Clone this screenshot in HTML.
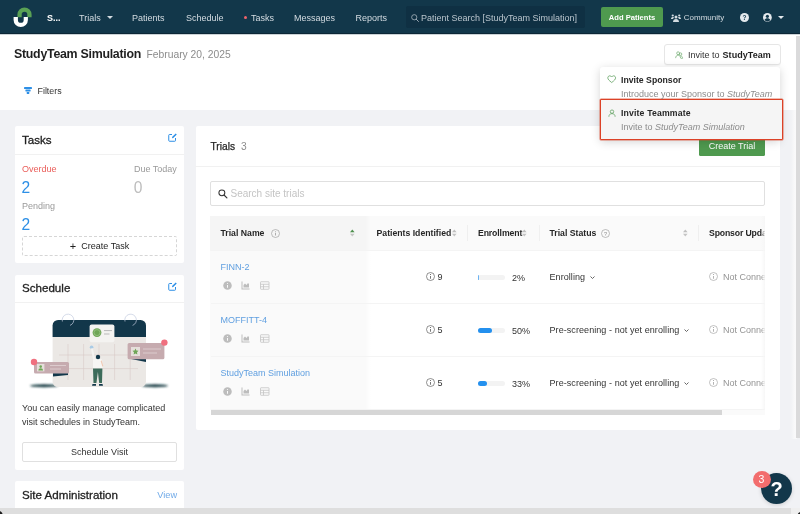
<!DOCTYPE html>
<html lang="en">
<head>
<meta charset="utf-8">
<title>StudyTeam Simulation</title>
<style>
*{box-sizing:border-box;margin:0;padding:0}
html,body{width:800px;height:514px;overflow:hidden;background:#f1f2f5}
body{will-change:transform;position:relative;font-family:"Liberation Sans",sans-serif;font-size:9px;color:#262626;-webkit-font-smoothing:antialiased}
.a{position:absolute}
.t{position:absolute;white-space:nowrap;line-height:12px;height:12px}
.b{font-weight:700}
.i{font-style:italic}
svg{position:absolute;overflow:visible}
/* nav */
#nav{left:0;top:0;width:800px;height:34px;background:#12374a}
#nav .t{color:#d3dbe1;top:11.500px}
#search{left:406px;top:6px;width:179px;height:22px;background:#0f3043;border-radius:2px}
#addp{left:601px;top:7px;width:62px;height:20px;background:#4f9a4f;border-radius:2px}
/* header */
#hdr{left:0;top:34px;width:800px;height:76px;background:#fff}
#invite{left:664px;top:44px;width:117px;height:21px;background:#fff;border:1px solid #e6e6e6;border-radius:3px;box-shadow:0 1px 1px rgba(0,0,0,.03)}
/* dropdown */
#dd{left:600px;top:67px;width:180px;height:72.500px;background:#fff;border-radius:3px;box-shadow:0 2px 10px rgba(0,0,0,.17)}
#dd2{left:599.500px;top:99px;width:183.800px;height:40.600px;background:#f5f5f5;border:1px solid #dc4227;border-radius:1px;box-shadow:0 0 0 .5px rgba(220,66,39,.7)}
.g{color:#8c8c8c}
/* cards */
.card{position:absolute;background:#fff;border-radius:2px}
.hl{position:absolute;height:1px;background:#f1f1f1}
.h2{font-size:11.6px;color:#1f1f1f;line-height:14px;height:14px;-webkit-text-stroke:.3px #1f1f1f}
.btn{position:absolute;border:1px solid #dddddd;border-radius:2px;background:#fff;text-align:center;line-height:18px;color:#333}
.th{font-size:8.700px;color:#262626}
.lk{color:#5f9fe0}
.st{color:#333;letter-spacing:.07px}
.nc{color:#9a9a9a}
.pb{position:absolute;width:27.500px;height:5.200px;border-radius:2.600px;background:#f3f3f3;margin-top:-.5px}
.pb i{display:block;height:5.200px;border-radius:2.600px;background:#2490ee}
#tbl .t{color:#333}
#tbl .t.lk{color:#5f9fe0}
#tbl .t.nc{color:#949494}
#tbl .t.th{color:#262626}
</style>
</head>
<body>
<!-- NAVBAR -->
<div id="nav" class="a">
  <svg width="34" height="34" viewBox="0 0 34 34" style="left:0;top:0">
    <path d="M17.4 17.200V14.600A7.100 7.100 0 0 1 31.600 14.600V17.200H27.300V14.600A2.800 2.800 0 0 0 21.700 14.600V17.200Z" fill="#5aa155"/>
    <path d="M13.600 16.900V19.900A7.150 7.150 0 0 0 27.900 19.900V16.900H23.700V19.900A2.900 2.900 0 0 1 17.900 19.900V16.900Z" fill="#fff"/>
  </svg>
  <div class="t b" style="left:47px;color:#fff">S...</div>
  <div class="t" style="left:79px">Trials</div>
  <svg width="6" height="3" viewBox="0 0 6 3" style="left:107px;top:16px"><path d="M0 0h6L3 3z" fill="#d3dbe1"/></svg>
  <div class="t" style="left:132px">Patients</div>
  <div class="t" style="left:186px">Schedule</div>
  <div class="a" style="left:244px;top:16px;width:3.4px;height:3.4px;border-radius:50%;background:#f0636b"></div>
  <div class="t" style="left:251px">Tasks</div>
  <div class="t" style="left:294px">Messages</div>
  <div class="t" style="left:355.5px">Reports</div>
  <div id="search" class="a"></div>
  <svg width="8" height="8" viewBox="0 0 16 16" style="left:410.5px;top:13.5px"><circle cx="6.5" cy="6.5" r="5.2" fill="none" stroke="#aab6bf" stroke-width="1.6"/><path d="M10.5 10.5L15 15" stroke="#aab6bf" stroke-width="1.8" stroke-linecap="round"/></svg>
  <div class="t" style="left:421px;color:#b9c4cc">Patient Search [StudyTeam Simulation]</div>
  <div id="addp" class="a"></div>
  <div class="t b" style="left:608.8px;color:#fff;font-size:7.6px">Add Patients</div>
  <svg width="10" height="8" viewBox="0 0 20 16" style="left:670.5px;top:13.5px" fill="#d3dbe1">
    <circle cx="10" cy="6" r="3"/><path d="M4 16c0-4 2.500-6 6-6s6 2 6 6z"/>
    <circle cx="3.500" cy="3" r="2.200"/><circle cx="16.500" cy="3" r="2.200"/>
    <path d="M0 10c0-2.500 1.500-4 3.500-4 1 0 1.800.3 2.500 1-1 1-1.500 2-2 3z"/><path d="M20 10c0-2.500-1.500-4-3.500-4-1 0-1.800.3-2.500 1 1 1 1.500 2 2 3z"/>
  </svg>
  <div class="t" style="left:683.8px;font-size:8px">Community</div>
  <svg width="9" height="9" viewBox="0 0 18 18" style="left:739.5px;top:13px"><circle cx="9" cy="9" r="9" fill="#e4e9ed"/><text x="9" y="13.600" text-anchor="middle" font-family="Liberation Sans, sans-serif" font-weight="700" font-size="13" fill="#12374a">?</text></svg>
  <svg width="8.800" height="8.800" viewBox="0 0 18 18" style="left:763.300px;top:13.100px"><circle cx="9" cy="9" r="9" fill="#e4e9ed"/><circle cx="9" cy="6.800" r="3.200" fill="#12374a"/><path d="M3 14.500c1-3 3.500-4 6-4s5 1 6 4c-1.500 1.800-3.500 2.700-6 2.700s-4.500-.9-6-2.700z" fill="#12374a"/></svg>
  <svg width="6" height="3" viewBox="0 0 6 3" style="left:778px;top:16px"><path d="M0 0h6L3 3z" fill="#e4e9ed"/></svg>
</div>

<div class="a" style="left:0;top:33px;width:800px;height:1px;background:#0c2636"></div>
<!-- PAGE HEADER -->
<div id="hdr" class="a"></div>
<div class="a" style="left:0;top:34px;width:800px;height:1px;background:rgba(18,55,74,.22)"></div>
<div class="t b" style="left:14px;top:47px;font-size:12.4px;letter-spacing:-.28px;line-height:14px;height:14px;color:#1f1f1f">StudyTeam Simulation</div>
<div class="t" style="left:146.500px;top:49px;font-size:10.3px;color:#8c8c8c">February 20, 2025</div>
<div id="invite" class="a"></div>
<svg width="8" height="8" viewBox="0 0 18 18" style="left:674.800px;top:50.500px" fill="none" stroke="#6aa86a" stroke-width="1.500">
  <circle cx="7" cy="5" r="3.200"/><path d="M1.500 16c0-4 2-6.500 5.500-6.500s5.500 2.500 5.500 6.500"/>
  <circle cx="12.500" cy="7" r="2.800"/><path d="M12.500 11c3 0 4.500 2 4.500 5.500h-4"/>
</svg>
<div class="t" style="left:688px;top:48.500px;color:#333">Invite to <span class="b" style="color:#1f1f1f;letter-spacing:.06px;margin-left:.5px">StudyTeam</span></div>
<svg width="8" height="7" viewBox="0 0 16 14" style="left:24.200px;top:87.400px" fill="#2d8fe6"><rect x="0" y="0" width="16" height="3.800" rx=".8"/><rect x="2.800" y="5.100" width="10.400" height="3.800" rx=".8"/><rect x="5.400" y="10.200" width="5.200" height="3.800" rx=".8"/></svg>
<div class="t" style="left:37.500px;top:85px;font-size:8.900px;color:#333">Filters</div>

<!-- LEFT: TASKS -->
<div class="card" style="left:15px;top:126.400px;width:169px;height:136.800px"></div>
<div class="t h2" style="left:22px;top:132.500px">Tasks</div>
<svg class="edit" width="9" height="9" viewBox="0 0 18 18" style="left:168px;top:133px" fill="none" stroke="#2d8fe6" stroke-width="2"><path d="M8 3H3a1.500 1.500 0 0 0-1.500 1.500V15A1.500 1.500 0 0 0 3 16.500h10.500A1.500 1.500 0 0 0 15 15v-5"/><path d="M8 10.500l.5-3L15.500 .8l2 2L10.500 10z" fill="#2d8fe6" stroke="none"/></svg>
<div class="hl" style="left:15px;top:154px;width:169px"></div>
<div class="t" style="left:22px;top:162.500px;color:#ea5e5a">Overdue</div>
<div class="t" style="left:134px;top:162.500px;color:#9a9a9a">Due Today</div>
<div class="t" style="left:21.500px;top:179px;font-size:15.600px;line-height:18px;height:18px;color:#2d8fe6">2</div>
<div class="t" style="left:133.800px;top:179px;font-size:15.600px;line-height:18px;height:18px;color:#bdbdbd">0</div>
<div class="t" style="left:22px;top:199.500px;color:#9a9a9a">Pending</div>
<div class="t" style="left:21.500px;top:216px;font-size:15.600px;line-height:18px;height:18px;color:#2d8fe6">2</div>
<div class="btn" style="left:22px;top:236px;width:155px;height:20px;border-style:dashed;border-color:#d6d6d6;color:#1f1f1f;line-height:17.500px"><span style="font-size:11px;position:relative;top:.5px;margin-right:5px">+</span>Create Task</div>

<!-- LEFT: SCHEDULE -->
<div class="card" style="left:15px;top:275px;width:169px;height:195px"></div>
<div class="t h2" style="left:22px;top:281px">Schedule</div>
<svg class="edit" width="9" height="9" viewBox="0 0 18 18" style="left:168px;top:281.500px" fill="none" stroke="#2d8fe6" stroke-width="2"><path d="M8 3H3a1.500 1.500 0 0 0-1.500 1.500V15A1.500 1.500 0 0 0 3 16.500h10.500A1.500 1.500 0 0 0 15 15v-5"/><path d="M8 10.500l.5-3L15.500 .8l2 2L10.500 10z" fill="#2d8fe6" stroke="none"/></svg>
<div class="hl" style="left:15px;top:302px;width:169px"></div>
<svg id="illus" width="160" height="90" viewBox="20 305 160 90" style="left:20px;top:305px">
  <defs><filter id="bl" x="-20%" y="-200%" width="140%" height="500%"><feGaussianBlur stdDeviation="1"/></filter></defs>
  <ellipse cx="44" cy="385.700" rx="14" ry="1.500" fill="#1d4147" filter="url(#bl)"/>
  <ellipse cx="155" cy="385.700" rx="13" ry="1.500" fill="#1d4147" filter="url(#bl)"/>
  <rect x="52.600" y="320" width="93.400" height="67" rx="5.500" fill="#ebe8e5"/>
  <path d="M52.600 337v-11.500a5.500 5.500 0 0 1 5.500-5.500h82.400a5.500 5.500 0 0 1 5.500 5.500V337z" fill="#12374a"/>
  <path d="M62.400 321.500A5.800 5.800 0 1 1 70 325.400" fill="none" stroke="#c3cce0" stroke-width=".7"/>
  <path d="M125 321.500A5.800 5.800 0 1 1 132.600 325.400" fill="none" stroke="#c3cce0" stroke-width=".7"/>
  <g stroke="#d9cbc7" stroke-width=".6"><path d="M68 344v36M83.600 344v36M99 344v36M114.600 344v36M130.200 344v36M59 355h79M59 368.600h79"/></g>
  <rect x="89.600" y="324.400" width="24.800" height="17.800" rx="2" fill="#f4f3f1"/>
  <circle cx="97" cy="332.600" r="4.400" fill="#6fa657"/><circle cx="97" cy="332.600" r="3" fill="none" stroke="#a8cc96" stroke-width=".6"/>
  <path d="M104 330.600h8M104 334h5.500" stroke="#b9b9b9" stroke-width="1"/>
  <path d="M131 359h15v3z" fill="#12374a"/>
  <rect x="127.600" y="343" width="36.800" height="16.200" rx="1.500" fill="#c6abaf"/>
  <rect x="131" y="347" width="9" height="9" fill="#e6dfdb"/>
  <path d="M135.500 348.600l.9 1.900 2.100.3-1.500 1.500.35 2.100-1.850-1-1.850 1 .35-2.100-1.500-1.500 2.100-.3z" fill="#6fa657"/>
  <path d="M143 349h18M143 353h14" stroke="#dccbcd" stroke-width="1"/>
  <circle cx="164.400" cy="342.600" r="3.200" fill="#f0707f"/>
  <path d="M53 373h15v2l-15 1.500z" fill="#12374a"/>
  <rect x="34" y="362" width="35" height="11.400" rx="1.500" fill="#c6abaf"/>
  <rect x="37" y="364" width="7.400" height="7.400" fill="#e6dfdb"/>
  <circle cx="40.700" cy="366.600" r="1.300" fill="#6fa657"/><path d="M38.300 370.600a2.400 2.400 0 0 1 4.800 0z" fill="#6fa657"/>
  <path d="M50 365.500h16M50 369h11" stroke="#dccbcd" stroke-width="1"/>
  <circle cx="34" cy="362" r="3.200" fill="#f0707f"/>
  <!-- person -->
  <circle cx="91.600" cy="347.200" r="1.800" fill="#a9cbe6"/>
  <path d="M91 348.500l1.800-.3 2.300 10.500-2 1z" fill="#f4f3f1"/>
  <path d="M93 359.600q4.500-1.600 9 0l.6 9h-9.600z" fill="#f7f6f4"/>
  <path d="M101.500 360l1.800 6-1 .5-1.500-5z" fill="#f0c9b4"/>
  <circle cx="98" cy="357" r="2.200" fill="#12374a"/>
  <path d="M93 368.400h9.400l-.4 14.600h-2.800l-1.300-11-1.500 11h-2.900z" fill="#3c6b5a"/>
  <path d="M92.500 384h3.500v1.800h-4zM99 384h3.500l.5 1.800h-4z" fill="#12374a"/>
</svg>
<div class="t" style="left:22px;top:402px;color:#333">You can easily manage complicated</div>
<div class="t" style="left:22px;top:416px;color:#333">visit schedules in StudyTeam.</div>
<div class="btn" style="left:22px;top:442px;width:155px;height:20px;line-height:19px;border-color:#e0e0e0">Schedule Visit</div>

<!-- LEFT: SITE ADMIN -->
<div class="card" style="left:15px;top:481px;width:169px;height:40px"></div>
<div class="t h2" style="left:22px;top:488px">Site Administration</div>
<div class="t" style="left:157.300px;top:489px;font-size:9.200px;color:#70aae8">View</div>

<!-- MAIN CARD -->
<div class="card" style="left:195.600px;top:126.400px;width:584.400px;height:303.700px"></div>
<div class="t" style="left:210.500px;top:141px;font-size:10.200px;color:#262626"><span style="-webkit-text-stroke:.25px #262626">Trials</span><span style="color:#8c8c8c;margin-left:6px">3</span></div>
<div class="a" style="left:699px;top:137px;width:66px;height:18.500px;background:#4f9a4f;border-radius:1.500px;color:#fff;text-align:center;line-height:18.500px">Create Trial</div>
<div class="hl" style="left:195px;top:166px;width:585px"></div>
<div class="a" style="left:210px;top:181px;width:555px;height:25px;border:1px solid #e0e0e0;border-radius:2px;background:#fff"></div>
<svg width="9.500" height="9.500" viewBox="0 0 16 16" style="left:218px;top:188.500px"><circle cx="6.500" cy="6.500" r="5" fill="none" stroke="#333" stroke-width="1.700"/><path d="M10.500 10.500L15 15" stroke="#333" stroke-width="1.900" stroke-linecap="round"/></svg>
<div class="t" style="left:230.500px;top:187.500px;font-size:10px;color:#c4c4c4">Search site trials</div>

<!-- TABLE -->
<div class="a" style="left:210.200px;top:216px;width:2px;height:34.500px;background:#f5f5f5"></div>
<div class="a" style="left:210.200px;top:250.500px;width:2px;height:159px;background:#fafafa"></div>
<div id="tbl" class="a" style="left:210.500px;top:216px;width:554.500px;height:199px;overflow:hidden;background:#fff">
  <div class="a" style="left:0;top:0;width:700px;height:34.500px;background:#fafafa"></div>
  <div class="a" style="left:0;top:0;width:155px;height:34.500px;background:#f5f5f5"></div>
  <div class="a" style="left:0;top:34.500px;width:155px;height:159px;background:#fafafa"></div>
  <div class="a" style="left:155px;top:0;width:5px;height:193.500px;background:linear-gradient(90deg,rgba(0,0,0,.02),rgba(0,0,0,0))"></div>
  <div class="hl" style="left:0;top:34px;width:700px;background:#f4f4f4"></div>
  <div class="hl" style="left:0;top:87px;width:700px;background:#f4f4f4"></div>
  <div class="hl" style="left:0;top:140px;width:700px;background:#f4f4f4"></div>
  <div class="hl" style="left:0;top:193px;width:700px;background:#f4f4f4"></div>
  <!-- header separators -->
  <div class="a" style="left:256.500px;top:9px;width:1px;height:16px;background:#efefef"></div>
  <div class="a" style="left:328px;top:9px;width:1px;height:16px;background:#f0f0f0"></div>
  <div class="a" style="left:487px;top:9px;width:1px;height:16px;background:#efefef"></div>
  <!-- header text -->
  <div class="t b th" style="left:10px;top:10.500px">Trial Name</div>
  <div class="t b th" style="left:166px;top:10.500px">Patients Identified</div>
  <div class="t b th" style="left:267.500px;top:10.500px;letter-spacing:-.12px">Enrollment</div>
  <div class="t b th" style="left:339px;top:10.500px">Trial Status</div>
  <div class="t b th" style="left:498.500px;top:10.500px;letter-spacing:-.15px">Sponsor Updates</div>
  <!-- header icons -->
  <svg class="ic" width="9" height="9" viewBox="0 0 18 18" style="left:60.500px;top:12.500px"><circle cx="9" cy="9" r="8" fill="none" stroke="#9b9b9b" stroke-width="1.300"/><path d="M9 8v5" stroke="#9b9b9b" stroke-width="1.600"/><circle cx="9" cy="5.300" r="1" fill="#9b9b9b"/></svg>
  <svg class="ic" width="9" height="9" viewBox="0 0 18 18" style="left:390px;top:12.500px"><circle cx="9" cy="9" r="8" fill="none" stroke="#9b9b9b" stroke-width="1.300"/><text x="9" y="13" text-anchor="middle" font-family="Liberation Sans, sans-serif" font-size="11" fill="#8c8c8c">?</text></svg>
  <svg width="4.600" height="8" viewBox="0 0 4.600 8" style="left:139.500px;top:13px"><path d="M0 3.300L2.300 .5 4.600 3.300z" fill="#4d8f4d"/><path d="M0 4.700L2.300 7.500 4.600 4.700z" fill="#c4c4c4"/></svg>
  <svg width="4.600" height="8" viewBox="0 0 4.600 8" style="left:241.500px;top:13px"><path d="M0 3.300L2.300 .5 4.600 3.300z" fill="#bfbfbf"/><path d="M0 4.700L2.300 7.500 4.600 4.700z" fill="#c4c4c4"/></svg>
  <svg width="4.600" height="8" viewBox="0 0 4.600 8" style="left:311.500px;top:13px"><path d="M0 3.300L2.300 .5 4.600 3.300z" fill="#bfbfbf"/><path d="M0 4.700L2.300 7.500 4.600 4.700z" fill="#c4c4c4"/></svg>
  <svg width="4.600" height="8" viewBox="0 0 4.600 8" style="left:472.500px;top:13px"><path d="M0 3.300L2.300 .5 4.600 3.300z" fill="#bfbfbf"/><path d="M0 4.700L2.300 7.500 4.600 4.700z" fill="#c4c4c4"/></svg>

  <!-- ROW 1 -->
  <div class="t lk" style="left:10px;top:45px">FINN-2</div>
  <div class="t" style="left:227px;top:55px">9</div>
  <div class="pb" style="left:267px;top:59.500px"><i style="width:.8px;background:#6db3f2"></i></div>
  <div class="t" style="left:301.500px;top:55.500px">2%</div>
  <div class="t st" style="left:339px;top:55px">Enrolling</div>
  <div class="t nc" style="left:512.500px;top:55px">Not Connected</div>
  <!-- ROW 2 -->
  <div class="t lk" style="left:10px;top:98px">MOFFITT-4</div>
  <div class="t" style="left:227px;top:108px">5</div>
  <div class="pb" style="left:267px;top:112.500px"><i style="width:14px"></i></div>
  <div class="t" style="left:301.500px;top:108.500px">50%</div>
  <div class="t st" style="left:339px;top:108px">Pre-screening - not yet enrolling</div>
  <div class="t nc" style="left:512.500px;top:108px">Not Connected</div>
  <!-- ROW 3 -->
  <div class="t lk" style="left:10px;top:151px">StudyTeam Simulation</div>
  <div class="t" style="left:227px;top:161px">5</div>
  <div class="pb" style="left:267px;top:165.500px"><i style="width:9.500px"></i></div>
  <div class="t" style="left:301.500px;top:161.500px">33%</div>
  <div class="t st" style="left:339px;top:161px">Pre-screening - not yet enrolling</div>
  <div class="t nc" style="left:512.500px;top:161px">Not Connected</div>
  <!-- scrollbar -->
  <div class="a" style="left:0;top:193.500px;width:554.500px;height:5.500px;background:#fafafa"></div>
  <div class="a" style="left:0;top:193.500px;width:511px;height:5.500px;background:#d6d6d6"></div>
</div>

<!-- ROW ICONS -->
<div class="a" style="left:210.500px;top:216px;width:554.500px;height:193.500px;overflow:hidden">
  <svg width="9" height="9" viewBox="0 0 18 18" style="left:12.500px;top:65.3px"><circle cx="9" cy="9" r="8.500" fill="#bdbdbd"/><path d="M9 8v5.500" stroke="#fafafa" stroke-width="2"/><circle cx="9" cy="5" r="1.200" fill="#fafafa"/></svg>
  <svg width="9" height="9" viewBox="0 0 18 18" style="left:30.800px;top:65.3px" fill="#bdbdbd"><path d="M1 1h2v14h14v2H1z"/><path d="M5 13V8l3-3 3 3 3-4 2 2v7z"/></svg>
  <svg width="9.500" height="9" viewBox="0 0 19 18" style="left:49.500px;top:65.3px" fill="none" stroke="#c4c4c4" stroke-width="1.600"><rect x="1" y="1.500" width="17" height="15" rx="1"/><path d="M1 6.500h17M1 11.500h17M7 6.500v10"/></svg>
  <svg width="9" height="9" viewBox="0 0 18 18" style="left:215.500px;top:56.3px"><circle cx="9" cy="9" r="8" fill="none" stroke="#555" stroke-width="1.300"/><path d="M9 8v5.500" stroke="#555" stroke-width="1.600"/><circle cx="9" cy="5" r="1.100" fill="#555"/></svg>
  <svg width="9" height="9" viewBox="0 0 18 18" style="left:498.500px;top:56.3px"><circle cx="9" cy="9" r="8" fill="none" stroke="#a0a0a0" stroke-width="1.300"/><path d="M9 8v5.500" stroke="#a0a0a0" stroke-width="1.600"/><circle cx="9" cy="5" r="1.100" fill="#a0a0a0"/></svg>
  <svg width="5" height="3.500" viewBox="0 0 10 7" style="left:379px;top:59.7px"><path d="M1 1l4 4 4-4" fill="none" stroke="#555" stroke-width="1.800"/></svg>
  <svg width="9" height="9" viewBox="0 0 18 18" style="left:12.500px;top:118.3px"><circle cx="9" cy="9" r="8.500" fill="#bdbdbd"/><path d="M9 8v5.500" stroke="#fafafa" stroke-width="2"/><circle cx="9" cy="5" r="1.200" fill="#fafafa"/></svg>
  <svg width="9" height="9" viewBox="0 0 18 18" style="left:30.800px;top:118.3px" fill="#bdbdbd"><path d="M1 1h2v14h14v2H1z"/><path d="M5 13V8l3-3 3 3 3-4 2 2v7z"/></svg>
  <svg width="9.500" height="9" viewBox="0 0 19 18" style="left:49.500px;top:118.3px" fill="none" stroke="#c4c4c4" stroke-width="1.600"><rect x="1" y="1.500" width="17" height="15" rx="1"/><path d="M1 6.500h17M1 11.500h17M7 6.500v10"/></svg>
  <svg width="9" height="9" viewBox="0 0 18 18" style="left:215.500px;top:109.3px"><circle cx="9" cy="9" r="8" fill="none" stroke="#555" stroke-width="1.300"/><path d="M9 8v5.500" stroke="#555" stroke-width="1.600"/><circle cx="9" cy="5" r="1.100" fill="#555"/></svg>
  <svg width="9" height="9" viewBox="0 0 18 18" style="left:498.500px;top:109.3px"><circle cx="9" cy="9" r="8" fill="none" stroke="#a0a0a0" stroke-width="1.300"/><path d="M9 8v5.500" stroke="#a0a0a0" stroke-width="1.600"/><circle cx="9" cy="5" r="1.100" fill="#a0a0a0"/></svg>
  <svg width="5" height="3.500" viewBox="0 0 10 7" style="left:473.5px;top:112.7px"><path d="M1 1l4 4 4-4" fill="none" stroke="#555" stroke-width="1.800"/></svg>
  <svg width="9" height="9" viewBox="0 0 18 18" style="left:12.500px;top:171.3px"><circle cx="9" cy="9" r="8.500" fill="#bdbdbd"/><path d="M9 8v5.500" stroke="#fafafa" stroke-width="2"/><circle cx="9" cy="5" r="1.200" fill="#fafafa"/></svg>
  <svg width="9" height="9" viewBox="0 0 18 18" style="left:30.800px;top:171.3px" fill="#bdbdbd"><path d="M1 1h2v14h14v2H1z"/><path d="M5 13V8l3-3 3 3 3-4 2 2v7z"/></svg>
  <svg width="9.500" height="9" viewBox="0 0 19 18" style="left:49.500px;top:171.3px" fill="none" stroke="#c4c4c4" stroke-width="1.600"><rect x="1" y="1.500" width="17" height="15" rx="1"/><path d="M1 6.500h17M1 11.500h17M7 6.500v10"/></svg>
  <svg width="9" height="9" viewBox="0 0 18 18" style="left:215.500px;top:162.3px"><circle cx="9" cy="9" r="8" fill="none" stroke="#555" stroke-width="1.300"/><path d="M9 8v5.500" stroke="#555" stroke-width="1.600"/><circle cx="9" cy="5" r="1.100" fill="#555"/></svg>
  <svg width="9" height="9" viewBox="0 0 18 18" style="left:498.500px;top:162.3px"><circle cx="9" cy="9" r="8" fill="none" stroke="#a0a0a0" stroke-width="1.300"/><path d="M9 8v5.500" stroke="#a0a0a0" stroke-width="1.600"/><circle cx="9" cy="5" r="1.100" fill="#a0a0a0"/></svg>
  <svg width="5" height="3.500" viewBox="0 0 10 7" style="left:473.5px;top:165.7px"><path d="M1 1l4 4 4-4" fill="none" stroke="#555" stroke-width="1.800"/></svg>
  <div class="a" style="left:550.500px;top:0;width:4px;height:193.500px;background:linear-gradient(90deg,rgba(255,255,255,0),rgba(246,246,246,.9))"></div>
</div>

<!-- DROPDOWN -->
<div id="dd" class="a"></div>
<div id="dd2" class="a"></div>
<svg width="9.400" height="8.200" viewBox="0 0 20 18" style="left:606.900px;top:75.300px"><path d="M10 16.500C4 12 1.500 9.500 1.500 6.200 1.500 3.600 3.400 1.800 5.800 1.800c1.700 0 3.200.9 4.200 2.500 1-1.600 2.500-2.500 4.200-2.500 2.400 0 4.300 1.800 4.300 4.400 0 3.300-2.500 5.800-8.500 10.300z" fill="none" stroke="#5b9e5b" stroke-width="1.700" stroke-linejoin="round"/></svg>
<div class="t b" style="left:621px;top:73.500px;font-size:8.700px;color:#262626">Invite Sponsor</div>
<div class="t g" style="left:621px;top:87.500px">Introduce your Sponsor to <span class="i">StudyTeam</span></div>
<svg width="8" height="8.400" viewBox="0 0 18 18" style="left:608px;top:108.800px" fill="none" stroke="#5b9e5b" stroke-width="1.700"><circle cx="9" cy="5.500" r="3.800"/><path d="M2 17c0-4.500 2.800-7 7-7s7 2.500 7 7"/></svg>
<div class="t b" style="left:621px;top:107.300px;font-size:8.700px;letter-spacing:.15px;color:#262626">Invite Teammate</div>
<div class="t g" style="left:621px;top:121px">Invite to <span class="i">StudyTeam Simulation</span></div>

<!-- SCROLLBARS -->
<div class="a" style="left:790.500px;top:110px;width:6px;height:328.500px;background:linear-gradient(90deg,rgba(249,249,250,0),rgba(249,249,250,1) 60%)"></div>
<div class="a" style="left:795.700px;top:35.500px;width:4.300px;height:402px;background:#dadadb"></div>
<div class="a" style="left:0;top:508px;width:800px;height:6px;background:#efefef"></div>
<div class="a" style="left:0;top:508px;width:790.500px;height:6px;background:#dedede"></div>
<div class="a" style="left:-6px;top:510px;width:9px;height:9px;background:#1c1c1c;border-radius:0 70% 0 0"></div>
<div class="a" style="left:796.500px;top:510.500px;width:9px;height:9px;background:#1c1c1c;border-radius:70% 0 0 0"></div>

<!-- HELP WIDGET -->
<div class="a" style="left:761px;top:473px;width:31px;height:31px;border-radius:50%;background:#12374a;box-shadow:0 1px 4px rgba(0,0,0,.15)"></div>
<div class="t b" style="left:761px;top:475px;width:31px;height:28px;line-height:28px;text-align:center;font-size:20px;color:#fff">?</div>
<div class="a" style="left:752.500px;top:471px;width:18px;height:17px;border-radius:50%;background:#f26d6d"></div>
<div class="t" style="left:752.500px;top:473px;width:18px;text-align:center;font-size:10.500px;line-height:13px;height:13px;color:#fff">3</div>
</body>
</html>
